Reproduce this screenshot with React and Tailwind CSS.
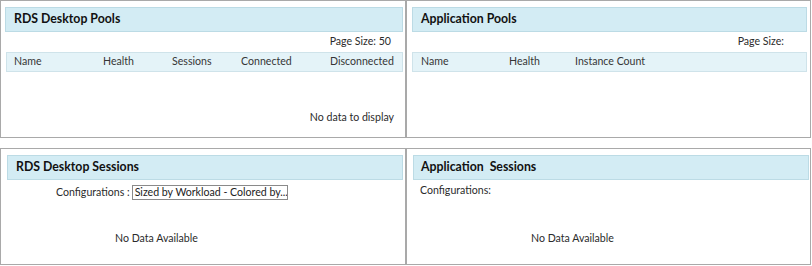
import React from "react";

const font = { fontFamily: 'Lato, "Open Sans", sans-serif' };

function Header({ title, className = "" }) {
  return (
    <div
      className={`h-[25px] bg-[#d3ecf4] border border-[#bcdbe5] flex items-center text-[12.3px] font-bold text-[#111] whitespace-pre ${className}`}
    >
      {title}
    </div>
  );
}

export default function App() {
  return (
    <div className="w-[812px] h-[266px] bg-white text-[#2b2b2b]" style={font}>
      {/* top row */}
      <div className="flex h-[138px]">
        {/* RDS Desktop Pools */}
        <div className="w-[406px] h-full border border-[#a9a9a9] flex flex-col">
          <Header title="RDS Desktop Pools" className="mt-[6px] ml-[4px] mr-[2px] pl-[8px]" />
          <div className="h-[20px] flex items-center justify-end pr-[14px] text-[10.6px]">Page Size: 50</div>
          <div className="h-[20px] ml-[5px] mr-[2px] bg-[#e4f3f8] border border-[#cfe3ea] grid grid-cols-[89px_69px_69px_89px_1fr] items-center pl-[7px] text-[10.6px] text-[#363636]">
            <span>Name</span>
            <span>Health</span>
            <span>Sessions</span>
            <span>Connected</span>
            <span>Disconnected</span>
          </div>
          <div className="flex-1 flex items-end justify-end pr-[11px] pb-[11px] text-[10.6px]">No data to display</div>
        </div>
        {/* Application Pools */}
        <div className="w-[405px] h-full border border-[#a9a9a9] flex flex-col">
          <Header title="Application Pools" className="mt-[6px] ml-[5px] mr-[3px] pl-[8px]" />
          <div className="h-[20px] flex items-center justify-end pr-[26px] text-[10.6px]">Page Size:</div>
          <div className="h-[20px] ml-[5px] mr-[3px] bg-[#e4f3f8] border border-[#cfe3ea] grid grid-cols-[88px_66px_1fr] items-center pl-[8px] text-[10.6px] text-[#363636]">
            <span>Name</span>
            <span>Health</span>
            <span>Instance Count</span>
          </div>
        </div>
      </div>

      {/* bottom row */}
      <div className="flex h-[117px] mt-[10px]">
        {/* RDS Desktop Sessions */}
        <div className="w-[406px] h-full border border-[#a9a9a9] flex flex-col">
          <Header title="RDS Desktop Sessions" className="mt-[6px] ml-[6px] mr-[2px] pl-[8px]" />
          <div className="mt-[5px] flex items-center pl-[55px] text-[10.6px]">
            <span className="mr-[2px]">Configurations :</span>
            <span className="h-[15px] w-[156px] border border-[#8a8a8a] flex items-center pl-[2px] text-[#222] whitespace-nowrap overflow-hidden">
              Sized by Workload - Colored by...
            </span>
          </div>
          <div className="mt-[30px] pl-[114px] text-[10.6px]">No Data Available</div>
        </div>
        {/* Application Sessions */}
        <div className="w-[405px] h-full border border-[#a9a9a9] flex flex-col">
          <Header title="Application  Sessions" className="mt-[6px] ml-[6px] mr-[1px] pl-[7px]" />
          <div className="mt-[3px] pl-[13px] text-[10.6px] h-[15px] flex items-center">Configurations:</div>
          <div className="mt-[33px] pl-[124px] text-[10.6px]">No Data Available</div>
        </div>
      </div>
    </div>
  );
}
